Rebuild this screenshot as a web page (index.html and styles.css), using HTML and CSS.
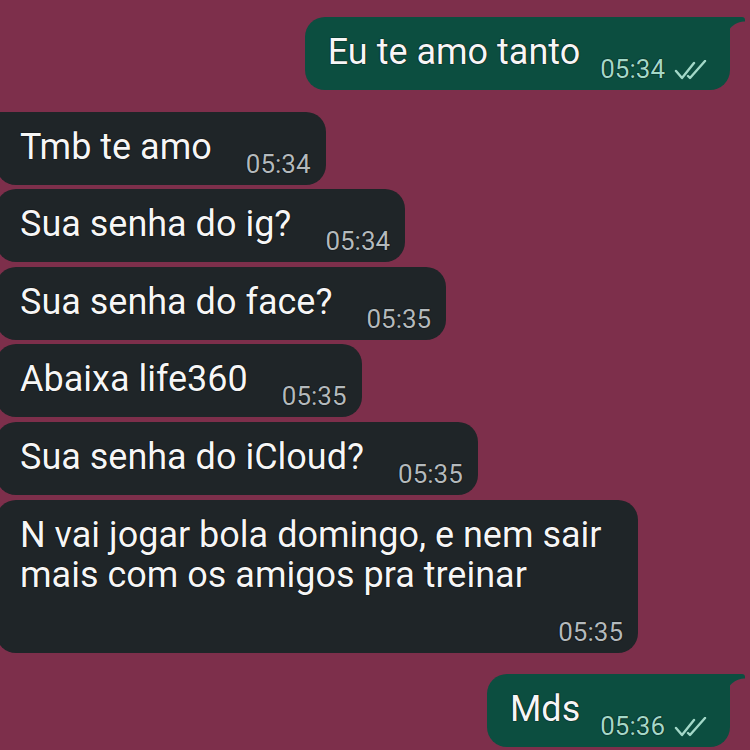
FILE: index.html
```html
<!DOCTYPE html>
<html lang="pt">
<head>
  <meta charset="UTF-8" />
  <meta name="viewport" content="width=device-width, initial-scale=1" />
  <title>Conversa</title>
  <link rel="stylesheet" href="styles.css">
</head>
<body>
  <div class="chat">
    <div class="msg out">
      <span class="text">Eu te amo tanto</span>
      <span class="meta">05:34
        <svg class="ticks" viewBox="0 0 36 20" width="36" height="20"><path d="M2 11 L8 18 L20 3 M14 16 L16 18 L31 1"/></svg>
      </span>
    </div>

    <div class="msg in first">
      <span class="text">Tmb te amo</span>
      <span class="meta">05:34</span>
    </div>
    <div class="msg in">
      <span class="text">Sua senha do ig?</span>
      <span class="meta">05:34</span>
    </div>
    <div class="msg in">
      <span class="text">Sua senha do face?</span>
      <span class="meta">05:35</span>
    </div>
    <div class="msg in">
      <span class="text">Abaixa life360</span>
      <span class="meta">05:35</span>
    </div>
    <div class="msg in">
      <span class="text">Sua senha do iCloud?</span>
      <span class="meta">05:35</span>
    </div>
    <div class="msg in long">
      <span class="text">N vai jogar bola domingo, e nem sair mais com os amigos pra treinar</span>
      <span class="meta">05:35</span>
    </div>

    <div class="msg out last">
      <span class="text">Mds</span>
      <span class="meta">05:36
        <svg class="ticks" viewBox="0 0 36 20" width="36" height="20"><path d="M2 11 L8 18 L20 3 M14 16 L16 18 L31 1"/></svg>
      </span>
    </div>
  </div>
</body>
</html>
```

FILE: styles.css
```css
body {
  margin: 0;
  background: #7d2f4b;
  font-family: Roboto, "Noto Sans", sans-serif;
  overflow: hidden;
}

.chat {
  display: flex;
  flex-direction: column;
  gap: 4.6px;
  padding-top: 17px;
}

.msg {
  position: relative;
  display: flex;
  flex-wrap: wrap;
  align-items: flex-end;
  box-sizing: border-box;
  padding: 15px 15px 8px 24px;
  border-radius: 20px;
  color: #f6f6f6;
  text-shadow: 0 0 1px #000, 0 0 1px #000;
}

.text {
  font-size: 36px;
  line-height: 40px;
  margin-bottom: 10px;
}

.meta {
  display: flex;
  align-items: center;
  font-size: 26px;
  line-height: 25px;
  margin-left: 34px;
}

/* incoming */
.in {
  align-self: flex-start;
  margin-left: -4px;
  max-width: 642px;
  background: #1f2528;
}

.in .meta {
  color: #b3b9bc;
}

.first {
  margin-top: 17px;
  border-top-left-radius: 0;
}

.long .meta {
  margin-left: auto;
  margin-top: 15px;
}

/* outgoing */
.out {
  align-self: flex-end;
  margin-right: 20px;
  background: #0c4e40;
  border-top-right-radius: 0;
  padding-left: 23px;
  padding-right: 20px;
}

.out .meta {
  color: #a3d8c8;
  margin-left: 20px;
}

.out::after {
  content: "";
  position: absolute;
  top: 0;
  right: -15px;
  width: 16px;
  height: 24px;
  background: radial-gradient(circle at 100% 100%, transparent 19px, #0c4e40 20px);
  border-top-right-radius: 3px;
}

.last {
  margin-top: 17px;
}

.ticks {
  margin-left: 9px;
  fill: none;
  stroke: #a3d8c8;
  stroke-width: 2.4;
  stroke-linecap: round;
  stroke-linejoin: round;
}
```
